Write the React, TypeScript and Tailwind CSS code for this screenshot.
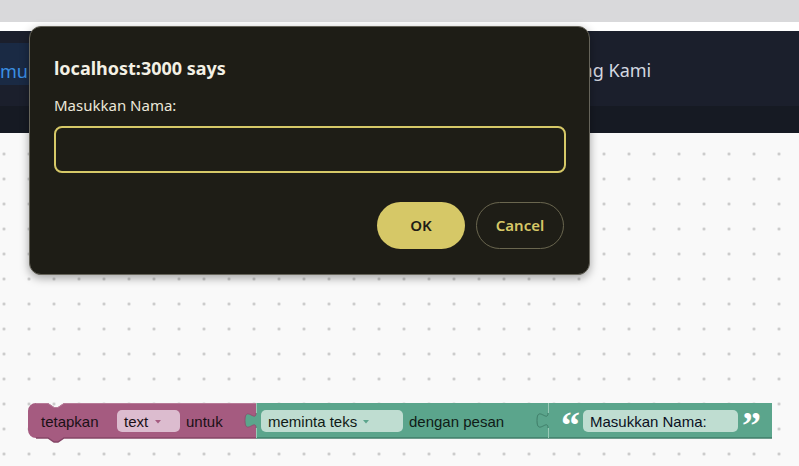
import React from 'react'

const blockFont = { fontFamily: '"Liberation Sans", Arial, sans-serif', fontSize: 15 }
const quoteFont = { fontFamily: '"Liberation Serif", Georgia, serif', fontSize: 38, fontWeight: 700 }

function Blocks() {
  return (
    <svg className="absolute left-0 top-[262px]" width="799" height="60" viewBox="0 0 799 60">
      {/* tetapkan block */}
      <path
        d="M28,16 a8,8 0 0 1 8,-8 H48 l6,4 h4 l6,-4 H262 V43 H64 l-6,4 h-4 l-6,-4 H36 a8,8 0 0 1 -8,-8 Z"
        fill="#a55b80"
      />
      <path d="M36,43 H48 l6,4 h4 l6,-4 H256" fill="none" stroke="#854566" strokeWidth="1.5" />
      <path d="M36,8.5 H48 l6,4 h4 l6,-4 H256" fill="none" stroke="#b77b98" strokeWidth="1" />

      {/* meminta teks block */}
      <path
        d="M256,8 H554 V43 H256 V33 c0,-10 -11,8 -11,-7.5 s11,2.5 11,-7.5 Z"
        fill="#5ba58c"
      />
      <path d="M256,43 H548" fill="none" stroke="#3f7d68" strokeWidth="1.5" />
      <path d="M256.5,8 V18 M256.5,33 V43" fill="none" stroke="#9bcab8" strokeWidth="1" />
      <path d="M256,33 c0,-10 -11,8 -11,-7.5 s11,2.5 11,-7.5" fill="none" stroke="#8a4a6b" strokeWidth="0.8" />

      {/* text block */}
      <path
        d="M548,8 H772 V43 H548 V33 c0,-10 -11,8 -11,-7.5 s11,2.5 11,-7.5 Z"
        fill="#5ba58c"
      />
      <path d="M548,43 H772" fill="none" stroke="#3f7d68" strokeWidth="1.5" />
      <path d="M548.5,8 V18 M548.5,33 V43" fill="none" stroke="#9bcab8" strokeWidth="1" />
      <path d="M548,33 c0,-10 -11,8 -11,-7.5 s11,2.5 11,-7.5" fill="none" stroke="#3f7d68" strokeWidth="1" />

      {/* labels */}
      <text x="41" y="32" fill="#1a1016" style={blockFont}>tetapkan</text>
      <rect x="117" y="15" width="63" height="22" rx="5" fill="#dcbccf" />
      <text x="124" y="32" fill="#1a1016" style={blockFont}>text</text>
      <path d="M155,25 h6 l-3,3.5 Z" fill="#a55b80" />
      <text x="186" y="32" fill="#1a1016" style={blockFont}>untuk</text>

      <rect x="261" y="15" width="142" height="22" rx="5" fill="#bfddd1" />
      <text x="268" y="32" fill="#0f1a16" style={blockFont}>meminta teks</text>
      <path d="M363,25 h6 l-3,3.5 Z" fill="#5ba58c" />
      <text x="409" y="32" fill="#0f1a16" style={blockFont}>dengan pesan</text>

      <text x="561" y="43" fill="#ffffff" style={quoteFont}>“</text>
      <rect x="583" y="15" width="155" height="22" rx="5" fill="#bfddd1" />
      <text x="590" y="32" fill="#0a0f1e" style={blockFont}>Masukkan Nama:</text>
      <text x="742" y="43" fill="#ffffff" style={quoteFont}>”</text>
    </svg>
  )
}

export default function App() {
  return (
    <div className="relative w-[799px] h-[466px] overflow-hidden flex flex-col bg-white font-['Noto_Sans',sans-serif]">
      {/* Browser strip */}
      <div className="h-[22px] bg-[#d9d9db]" />
      <div className="h-[9px] bg-white" />

      {/* Navbar */}
      <nav className="h-[75px] bg-[#1b1f2c] flex items-center overflow-hidden">
        <div className="h-[42px] -mt-[10px] flex items-center bg-[#1a2a44] w-[60px]">
          <span className="mt-[16px] text-[18px] text-[#3b8fe3]">mu</span>
        </div>
        <span className="ml-[475px] mt-[4px] text-[18px] text-[#d4d8e0]">Tentang Kami</span>
      </nav>
      <div className="h-[27px] bg-[#161a23]" />

      {/* Workspace */}
      <div className="relative flex-1 bg-[#f9f9f9] bg-[radial-gradient(circle,#c4c4c4_1.1px,transparent_1.6px)] bg-size-[25px_25px] bg-position-[-8.5px_8.5px]">
        <Blocks />
      </div>

      {/* Prompt dialog */}
      <div className="absolute left-[29px] top-[26px] w-[561px] h-[249px] rounded-[12px] bg-[#1e1d16] border border-[#66645a] shadow-[0_3px_10px_rgba(0,0,0,0.35)] pt-[29px] pl-[24px] pr-[23px] flex flex-col">
        <h1 className="h-6 leading-6 text-[18px] font-bold text-[#f3f0e4]">localhost:3000 says</h1>
        <p className="mt-[15px] h-5 leading-5 text-[15px] text-[#ebe7d9]">Masukkan Nama:</p>
        <input className="mt-[11px] h-[47px] w-full rounded-[8px] border-2 border-[#d6c867] bg-transparent outline-none px-3 text-[#f3f0e4]" />
        <div className="mt-[29px] flex justify-end gap-[11px] pr-[2px]">
          <button className="w-[88px] h-[47px] rounded-full bg-[#d6c867] text-[15px] font-semibold text-[#1e1d16]">OK</button>
          <button className="w-[88px] h-[47px] rounded-full border border-[#6a664f] text-[15px] font-semibold text-[#d6c867]">Cancel</button>
        </div>
      </div>
    </div>
  )
}
